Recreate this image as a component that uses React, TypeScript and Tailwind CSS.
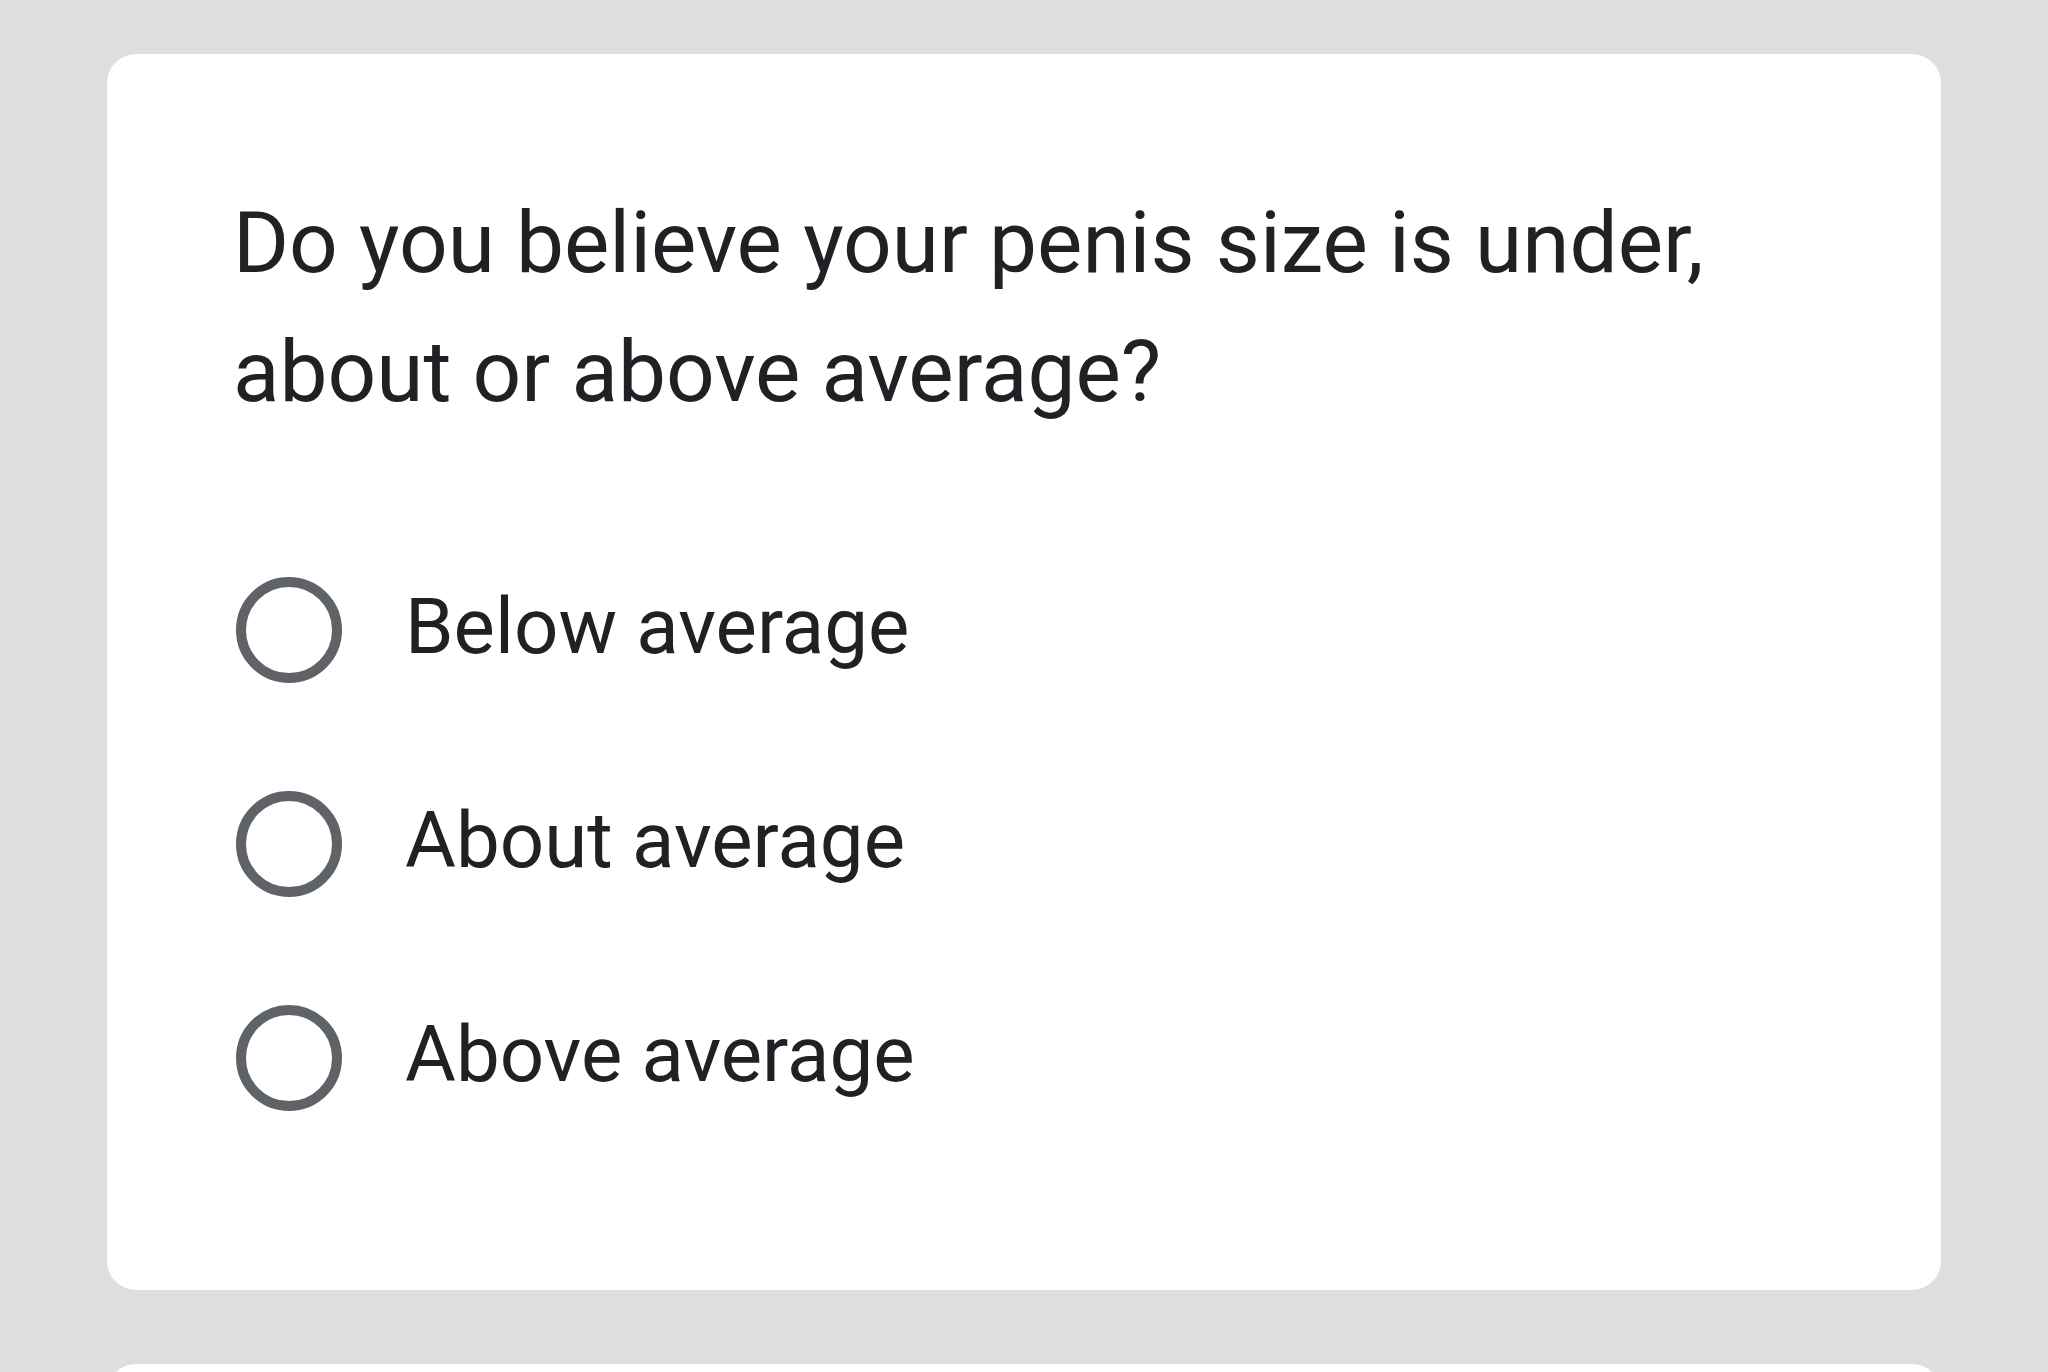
import React from 'react';

const OPTIONS = ['Below average', 'About average', 'Above average'];

function Radio() {
  return (
    <span className="block ml-[3px] w-[106px] h-[106px] shrink-0 rounded-full border-[10px] border-[#5f6368]" />
  );
}

export default function App() {
  return (
    <div className="min-h-screen bg-[#dedede] pt-[53px] pl-[106px] pr-[106px] font-['Roboto',sans-serif] text-[#202124]">
      <div className="w-[1836px] bg-white rounded-[30px] border border-[#dadce0] pl-[126px] pt-[125px] pb-[179px]">
        <div className="text-[85.5px] leading-[129px] w-[1560px]">
          Do you believe your penis size is under, about or above average?
        </div>
        <div className="mt-[140px] flex flex-col gap-[108px]">
          {OPTIONS.map((o) => (
            <label key={o} className="flex items-center gap-[63px]">
              <Radio />
              <span className="text-[78px] leading-[106px] -mt-[7px]">{o}</span>
            </label>
          ))}
        </div>
      </div>
      <div className="mt-[72px] w-[1836px] h-[40px] bg-white rounded-t-[30px] border border-[#dadce0]" />
    </div>
  );
}
